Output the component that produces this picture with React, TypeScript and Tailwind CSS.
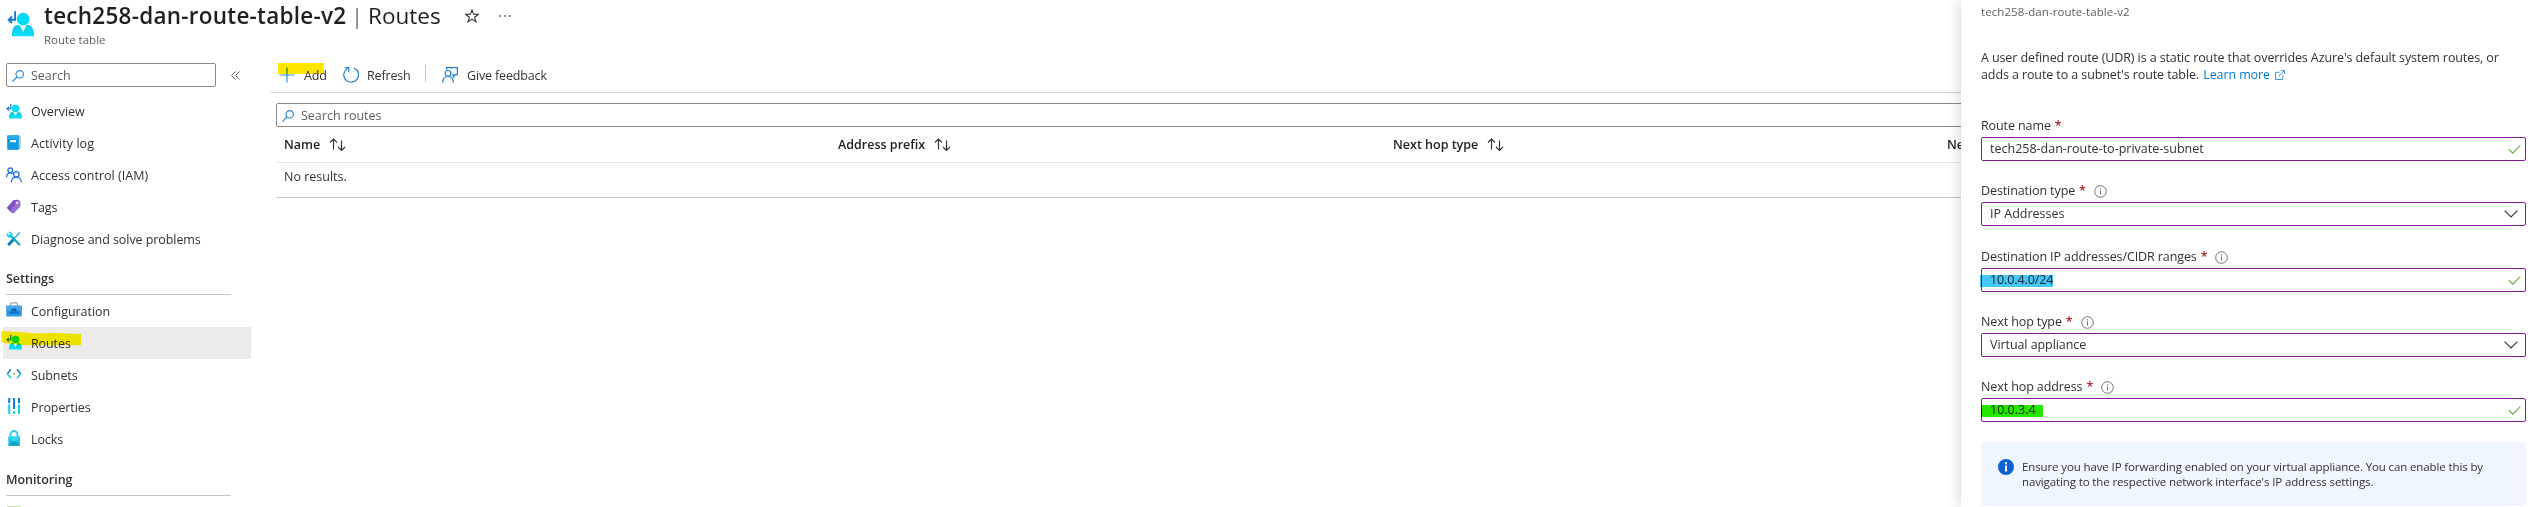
import React from 'react';

type IconProps = { className?: string };

const RouteIcon = ({ className = 'size-4' }: IconProps) => (
  <svg viewBox="0 0 26 26" className={className}>
    <defs>
      <linearGradient id="person" x1="0" y1="0" x2="0" y2="1">
        <stop offset="0" stopColor="#14c8e0" />
        <stop offset="1" stopColor="#00e0f8" />
      </linearGradient>
    </defs>
    <path d="M4.800 25.200c-.2-6 1.200-10.700 6-10.700h9.600c4 0 5.600 5 5.600 9.700 0 .6-.4 1-1 1z" fill="url(#person)" />
    <path d="M12 14.500h7l-3.500 6.500z" fill="#f2fdff" />
    <circle cx="15.500" cy="8.800" r="6.100" fill="#00dcf5" />
    <path d="M7.800 1.200v8.200H2M4.800 6.200L1.600 9.400l3.200 3.100" fill="none" stroke="#1173d4" strokeWidth="1.800" />
  </svg>
);

const BookIcon = () => (
  <svg viewBox="0 0 16 16" className="size-4">
    <rect x="3.500" y=".7" width="10.500" height="13.500" rx="1" fill="#d5e9f8" stroke="#5b8fb8" strokeWidth=".8" />
    <path d="M2.200.5h9.600c.6 0 1 .4 1 1v12.200c0 .6-.4 1-1 1H2.200c-.6 0-1-.4-1-1V1.500c0-.6.400-1 1-1z" fill="#0d9ae0" />
    <path d="M2.200.5h9.600c.6 0 1 .4 1 1V4H1.200V1.500c0-.6.400-1 1-1z" fill="#28abe9" />
    <rect x="4.300" y="5" width="5.700" height="2.200" fill="#fff" />
  </svg>
);

const PeopleIcon = () => (
  <svg viewBox="0 0 16 16" className="size-4" fill="none" stroke="#1a6fdb" strokeWidth="1.250">
    <circle cx="4.300" cy="3.300" r="2.400" />
    <path d="M.6 10.200C.8 7.200 2.300 5.900 4.300 5.900c1 0 1.800.300 2.500.900" />
    <circle cx="10.300" cy="7.300" r="2.700" />
    <path d="M5.300 15.200c.2-3.200 2.200-5 5-5s4.800 1.800 5 5" />
  </svg>
);

const TagIcon = () => (
  <svg viewBox="0 0 16 16" className="size-4">
    <path d="M7.500 1.200L12 .7c.9 0 2 .8 2.200 1.800l.3 4.300c0 .5-.2 1-.5 1.300L7.800 14.200c-.5.5-1.200.5-1.700 0L1.500 9.600c-.5-.5-.5-1.200 0-1.700z" fill="#9a72d0" />
    <path d="M7.500 1.200L12 .7 4.500 12.600l-3-3c-.5-.5-.5-1.200 0-1.700z" fill="#8050c8" />
    <circle cx="11" cy="3.800" r="1.300" fill="#e6d9f7" />
  </svg>
);

const ToolsIcon = () => (
  <svg viewBox="0 0 16 16" className="size-4" fill="none" strokeLinecap="round">
    <path d="M13.500 1.800L8 7.500" stroke="#36b8e0" strokeWidth="1.600" />
    <path d="M7.500 8.500L3 13.200" stroke="#0a7fae" strokeWidth="3" />
    <path d="M4.500 4.500l8.800 9" stroke="#12a7c9" strokeWidth="2.300" />
    <path d="M1.500 3.200c.3 2 1.800 3 3.800 2.500.8-1.600.3-3.300-1.500-4.200" stroke="#1ccbe6" strokeWidth="1.900" />
  </svg>
);

const BriefcaseIcon = () => (
  <svg viewBox="0 0 16 16" className="size-4">
    <path d="M4.600 4V1.700c0-.5.300-.9.9-.9h5c.6 0 .9.400.9.900V4" fill="none" stroke="#a5a5a5" strokeWidth="1.200" />
    <rect x=".2" y="3.400" width="15.600" height="11.100" rx=".7" fill="#2f96e4" />
    <path d="M.2 4h15.600v3.400L8 9.600.2 7.400z" fill="#48a7ee" />
    <rect x="5.500" y="6.600" width="5" height="2.600" fill="#0b5fb0" />
    <path d="M3 9.500h10v2.300H3z" fill="#0f74cf" />
  </svg>
);

const SubnetIcon = () => (
  <svg viewBox="0 0 16 16" className="size-4" fill="none" strokeWidth="1.700">
    <path d="M4.900 3.300L1.200 8" stroke="#1b87d8" />
    <path d="M1.200 7.500l3.700 4.700" stroke="#30c8ef" />
    <path d="M11.100 3.300L14.800 8" stroke="#1b87d8" />
    <path d="M14.800 7.500l-3.700 4.700" stroke="#30c8ef" />
    <circle cx="8" cy="7.800" r="1.100" fill="#7cc142" />
  </svg>
);

const PropertiesIcon = () => (
  <svg viewBox="0 0 16 16" className="size-4">
    <path d="M2.200 0h2v5h-2zM12 0h2v5h-2zM7.100 0h2v11h-2z" fill="#0f78d0" />
    <path d="M2.200 6.200h2V16h-2zM12 6.200h2V16h-2zM7.100 13h2v3h-2z" fill="#15d3f3" />
  </svg>
);

const LockIcon = () => (
  <svg viewBox="0 0 16 16" className="size-4">
    <path d="M4.500 7.500V4.600a3.500 3.500 0 017 0v2.900" fill="none" stroke="#35c7e8" strokeWidth="2" />
    <rect x="2.300" y="6.500" width="11.700" height="9.200" rx=".8" fill="#1cc7e4" />
    <path d="M2.300 14.900L8.200 10l5.800 4.900c0 .5-.4.800-.8.800H3.100c-.4 0-.8-.3-.8-.8z" fill="#159fc1" />
    <path d="M2.300 7.300c0-.5.400-.8.800-.8h10.100c.4 0 .8.300.8.800L8.200 12z" fill="#32d9f2" />
  </svg>
);

const SearchIcon = () => (
  <svg viewBox="0 0 12 12" className="size-3 shrink-0" fill="none" stroke="#2583d0" strokeWidth="1.100">
    <circle cx="7.700" cy="4.300" r="3.700" />
    <path d="M5 7L.4 11.600" />
  </svg>
);

const SortIcon = () => (
  <svg viewBox="0 0 17 14" className="h-3.5 w-[17px] shrink-0" fill="none" stroke="#323130" strokeWidth="1.150">
    <path d="M4.500 11.500V1M1 4.500L4.500 1 8 4.500M12.500 2.500v10M9 9l3.500 3.500L16 9" />
  </svg>
);

const InfoIcon = () => (
  <svg viewBox="0 0 13 13" className="ml-2 size-[13px] shrink-0 translate-y-px" fill="none" stroke="#6b6a69">
    <circle cx="6.500" cy="6.500" r="5.800" strokeWidth=".95" />
    <path d="M6.500 5.500v4M6.500 3.200v1.200" strokeWidth="1" />
  </svg>
);

const CheckIcon = () => (
  <svg viewBox="0 0 13 9" className="mr-1 h-[9px] w-[13px]" fill="none" stroke="#62b044" strokeWidth="1.150">
    <path d="M.7 4.200l4 4L12.300.6" />
  </svg>
);

const ChevronIcon = () => (
  <svg viewBox="0 0 14 8" className="mr-[7px] h-2 w-3.5" fill="none" stroke="#3b3a39" strokeWidth="1.200">
    <path d="M.6.600L7 7 13.400.6" />
  </svg>
);

type NavEntry = { label: string; icon: React.ReactNode; track?: string; active?: boolean };

const NavItem = ({ label, icon, track, active }: NavEntry) => (
  <div className={active ? 'relative flex h-8 items-center bg-[#edebe9] pl-[3px]' : 'flex h-8 items-center pl-[3px]'}>
    <span className="w-[25px] shrink-0 -translate-y-px">{icon}</span>
    <span className={track}>{label}</span>
    {active && (
      <svg viewBox="0 0 81 15" className="absolute -left-0.5 top-1 h-[15px] w-[81px] mix-blend-multiply">
        <path d="M0 0l18 1 17 1.500 20-.5 25 1v11.300H24L7 12.600 0 11z" fill="#fff500" />
      </svg>
    )}
  </div>
);

const SectionTitle = ({ children }: { children: string }) => (
  <div className="ml-[3px] flex h-8 w-[225px] items-center border-b border-[#c8c6c4] pt-px font-semibold tracking-[-0.05px]">
    {children}
  </div>
);

const general: NavEntry[] = [
  { label: 'Overview', icon: <RouteIcon />, track: 'tracking-[-0.07px]' },
  { label: 'Activity log', icon: <BookIcon />, track: 'tracking-[0.06px]' },
  { label: 'Access control (IAM)', icon: <PeopleIcon />, track: 'tracking-[0.02px]' },
  { label: 'Tags', icon: <TagIcon /> },
  { label: 'Diagnose and solve problems', icon: <ToolsIcon />, track: 'tracking-[-0.07px]' },
];

const settings: NavEntry[] = [
  { label: 'Configuration', icon: <BriefcaseIcon />, track: 'pt-0.5 tracking-[-0.05px]' },
  { label: 'Routes', icon: <RouteIcon />, track: 'pt-0.5 tracking-[-0.1px]', active: true },
  { label: 'Subnets', icon: <SubnetIcon />, track: 'pt-0.5 tracking-[-0.1px]' },
  { label: 'Properties', icon: <PropertiesIcon />, track: 'pt-0.5 tracking-[-0.1px]' },
  { label: 'Locks', icon: <LockIcon />, track: 'pt-0.5 tracking-[-0.1px]' },
];

const Column = ({ children, width }: { children: string; width: string }) => (
  <div className={`flex shrink-0 items-center gap-[9px] ${width}`}>
    <span className="font-[550] whitespace-nowrap">{children}</span>
    <SortIcon />
  </div>
);

type FieldProps = {
  label: string;
  value: string;
  info?: boolean;
  select?: boolean;
  height: string;
  track?: string;
  mark?: string;
};

const Field = ({ label, value, info, select, height, track, mark }: FieldProps) => (
  <div className={height}>
    <div className="flex h-[21px] items-center pb-0.5 tracking-[-0.1px]">
      <span>{label}</span>
      <span className="ml-1 font-semibold text-[#a4262c]">*</span>
      {info && <InfoIcon />}
    </div>
    <div className="relative flex h-6 items-center justify-between rounded-xs border border-[#881798] pl-2">
      <span className={track}>{value}</span>
      {select ? <ChevronIcon /> : <CheckIcon />}
      {mark && <span className={`absolute mix-blend-multiply ${mark}`} />}
    </div>
  </div>
);

export default function App() {
  return (
    <div className="relative h-[507px] w-[2541px] overflow-hidden bg-white font-['Open_Sans','Noto_Sans',sans-serif] text-[12.5px] leading-4 text-[#323130]">
      <header className="flex h-[63px] pl-[7px]">
        <RouteIcon className="mt-[10px] size-[27px]" />
        <div className="ml-[10px]">
          <div className="flex h-8 items-center text-[22.5px] whitespace-nowrap text-[#201f1e]">
            <span className="w-[304px] font-semibold tracking-[0.25px]">tech258-dan-route-table-v2</span>
            <span className="w-[20px] pl-[3px] font-light">|</span>
            <span className="w-[97px]">Routes</span>
            <svg viewBox="0 0 14 14" className="size-3.5" fill="none" stroke="#323130" strokeWidth="1.100">
              <path d="M7 1l1.600 4.300 4.600.1-3.600 2.800 1.300 4.500L7 10.100l-3.900 2.600 1.300-4.500L.8 5.400l4.600-.1z" />
            </svg>
            <svg viewBox="0 0 12 4" className="ml-5 h-1 w-3" fill="#605e5c">
              <circle cx="1.200" cy="2" r=".9" />
              <circle cx="6" cy="2" r=".9" />
              <circle cx="10.800" cy="2" r=".9" />
            </svg>
          </div>
          <div className="text-[11.5px] text-[#605e5c]">Route table</div>
        </div>
      </header>

      <div className="flex">
        <aside className="w-[251px] shrink-0 pl-[3px]">
          <div className="mb-2 flex items-center pl-[3px]">
            <div className="flex h-6 w-[210px] items-center gap-[7px] rounded-xs border border-[#8a8886] pt-px pl-[5px] text-[#605e5c]">
              <SearchIcon />
              Search
            </div>
            <svg viewBox="0 0 9 9" className="ml-[15px] size-[9px]" fill="none" stroke="#605e5c">
              <path d="M4.500.5l-4 4 4 4M8.500.5l-4 4 4 4" />
            </svg>
          </div>
          <nav className="pt-px">
            {general.map((e) => (
              <NavItem key={e.label} {...e} />
            ))}
            <div className="mt-[7px]">
              <SectionTitle>Settings</SectionTitle>
            </div>
            {settings.map((e) => (
              <NavItem key={e.label} {...e} />
            ))}
            <div className="mt-[9px]">
              <SectionTitle>Monitoring</SectionTitle>
            </div>
            <div className="mt-[10px] ml-1 h-1 w-3.5 bg-[#c3e2ab]" />
          </nav>
        </aside>

        <main className="ml-5 min-w-0 flex-1">
          <div className="flex h-[30px] items-start border-b border-[#d2d0ce]">
            <div className="relative flex h-[25px] items-center pl-2">
              <svg viewBox="0 0 16 16" className="size-4 -translate-y-px" fill="none" stroke="#2f8fdc" strokeWidth="1.200">
                <path d="M8 .5v15M.5 8h15" />
              </svg>
              <span className="w-[39px] pl-[9px] tracking-[-0.15px]">Add</span>
              <span className="absolute top-0 left-[7px] h-[11px] w-[46px] bg-[#ffe600] mix-blend-multiply" />
            </div>
            <div className="flex h-[25px] w-[82px] items-center gap-2 pl-[9px] tracking-[-0.15px]">
              <svg viewBox="0 0 16 16" className="size-4 shrink-0 -translate-y-px" fill="none" stroke="#1a7fd0" strokeWidth="1.200">
                <path d="M11 1a7.400 7.400 0 11-6.500.400M1.800.7h4v4.200" />
              </svg>
              Refresh
            </div>
            <span className="mt-0.5 ml-[9px] h-[17px] w-px bg-[#c8c6c4]" />
            <div className="flex h-[25px] items-center gap-[9px] pl-4 tracking-[-0.15px]">
              <svg viewBox="0 0 16 16" className="size-4 -translate-y-px" fill="none" stroke="#1a7fd0" strokeWidth="1.200">
                <path d="M4.600 2.700V.6h10.800v7.100h-2.100l-2 2.200V7.700h-1" />
                <circle cx="6" cy="6.400" r="2.900" />
                <path d="M.6 15.500c.2-3.600 2.300-6 5.400-6s5.200 2.400 5.400 6" />
              </svg>
              <span>Give feedback</span>
            </div>
          </div>
          <div className="ml-[5px]">
            <div className="mt-[10px] flex h-6 items-center gap-[7px] rounded-xs border border-[#8a8886] pt-px pl-[5px] text-[#605e5c]">
              <SearchIcon />
              Search routes
            </div>
            <div className="flex h-9 items-center border-b border-[#e6e5e4] pl-2 text-[#201f1e]">
              <Column width="w-[554px]">Name</Column>
              <Column width="w-[555px]">Address prefix</Column>
              <Column width="w-[554px]">Next hop type</Column>
              <span className="font-[550]">Ne</span>
            </div>
            <div className="flex h-[35px] items-center border-b border-[#c8c6c4] pb-[7px] pl-2">No results.</div>
          </div>
        </main>
      </div>

      <section className="absolute top-0 right-0 h-full w-[580px] bg-white pr-[15px] pl-5 shadow-[0_0_14px_rgba(0,0,0,0.2)]">
        <div className="h-[49px] pt-1 text-[11.5px] tracking-[0.08px] text-[#605e5c]">tech258-dan-route-table-v2</div>
        <p className="h-[67px] leading-[17px] tracking-[-0.1px] whitespace-nowrap">
          A user defined route (UDR) is a static route that overrides Azure's default system routes, or
          <br />
          adds a route to a subnet's route table.{' '}
          <span className="ml-px text-[#0078d4]">Learn more</span>
          <svg viewBox="0 0 11 11" className="ml-[5px] inline size-[10px] align-[-1px]" fill="none" stroke="#2b87d8" strokeWidth="1">
            <path d="M5 2.500H.6v7.900h7.900V6M4 7l6.400-6.400M6.700.6h3.800v3.800" />
          </svg>
        </p>
        <Field height="h-[65px]" label="Route name" value="tech258-dan-route-to-private-subnet" />
        <Field height="h-[66px]" label="Destination type" value="IP Addresses" info select />
        <Field
          height="h-[65px]"
          label="Destination IP addresses/CIDR ranges"
          value="10.0.4.0/24"
          info
          track="tracking-[-0.1px]"
          mark="-left-0.5 top-1.5 h-3 w-[73px] bg-[#45c8f5]"
        />
        <Field height="h-[65px]" label="Next hop type" value="Virtual appliance" track="tracking-[-0.07px]" info select />
        <Field
          height="h-[65px]"
          label="Next hop address"
          value="10.0.3.4"
          info
          mark="-left-px top-1.5 h-3 w-[62px] bg-[#26e600]"
        />
        <div className="flex h-16 rounded-xs bg-[#eff6ff] pt-[17px] pl-[17px]">
          <svg viewBox="0 0 16 16" className="size-4 shrink-0">
            <circle cx="8" cy="8" r="8" fill="#0a62d6" />
            <path d="M7 6.500h2v6H7zM7 3.300h2v2H7z" fill="#fff" />
          </svg>
          <p className="ml-2 text-[11.5px] leading-[15px] tracking-[-0.12px] whitespace-nowrap">
            Ensure you have IP forwarding enabled on your virtual appliance. You can enable this by
            <br />
            navigating to the respective network interface's IP address settings.
          </p>
        </div>
      </section>
    </div>
  );
}
